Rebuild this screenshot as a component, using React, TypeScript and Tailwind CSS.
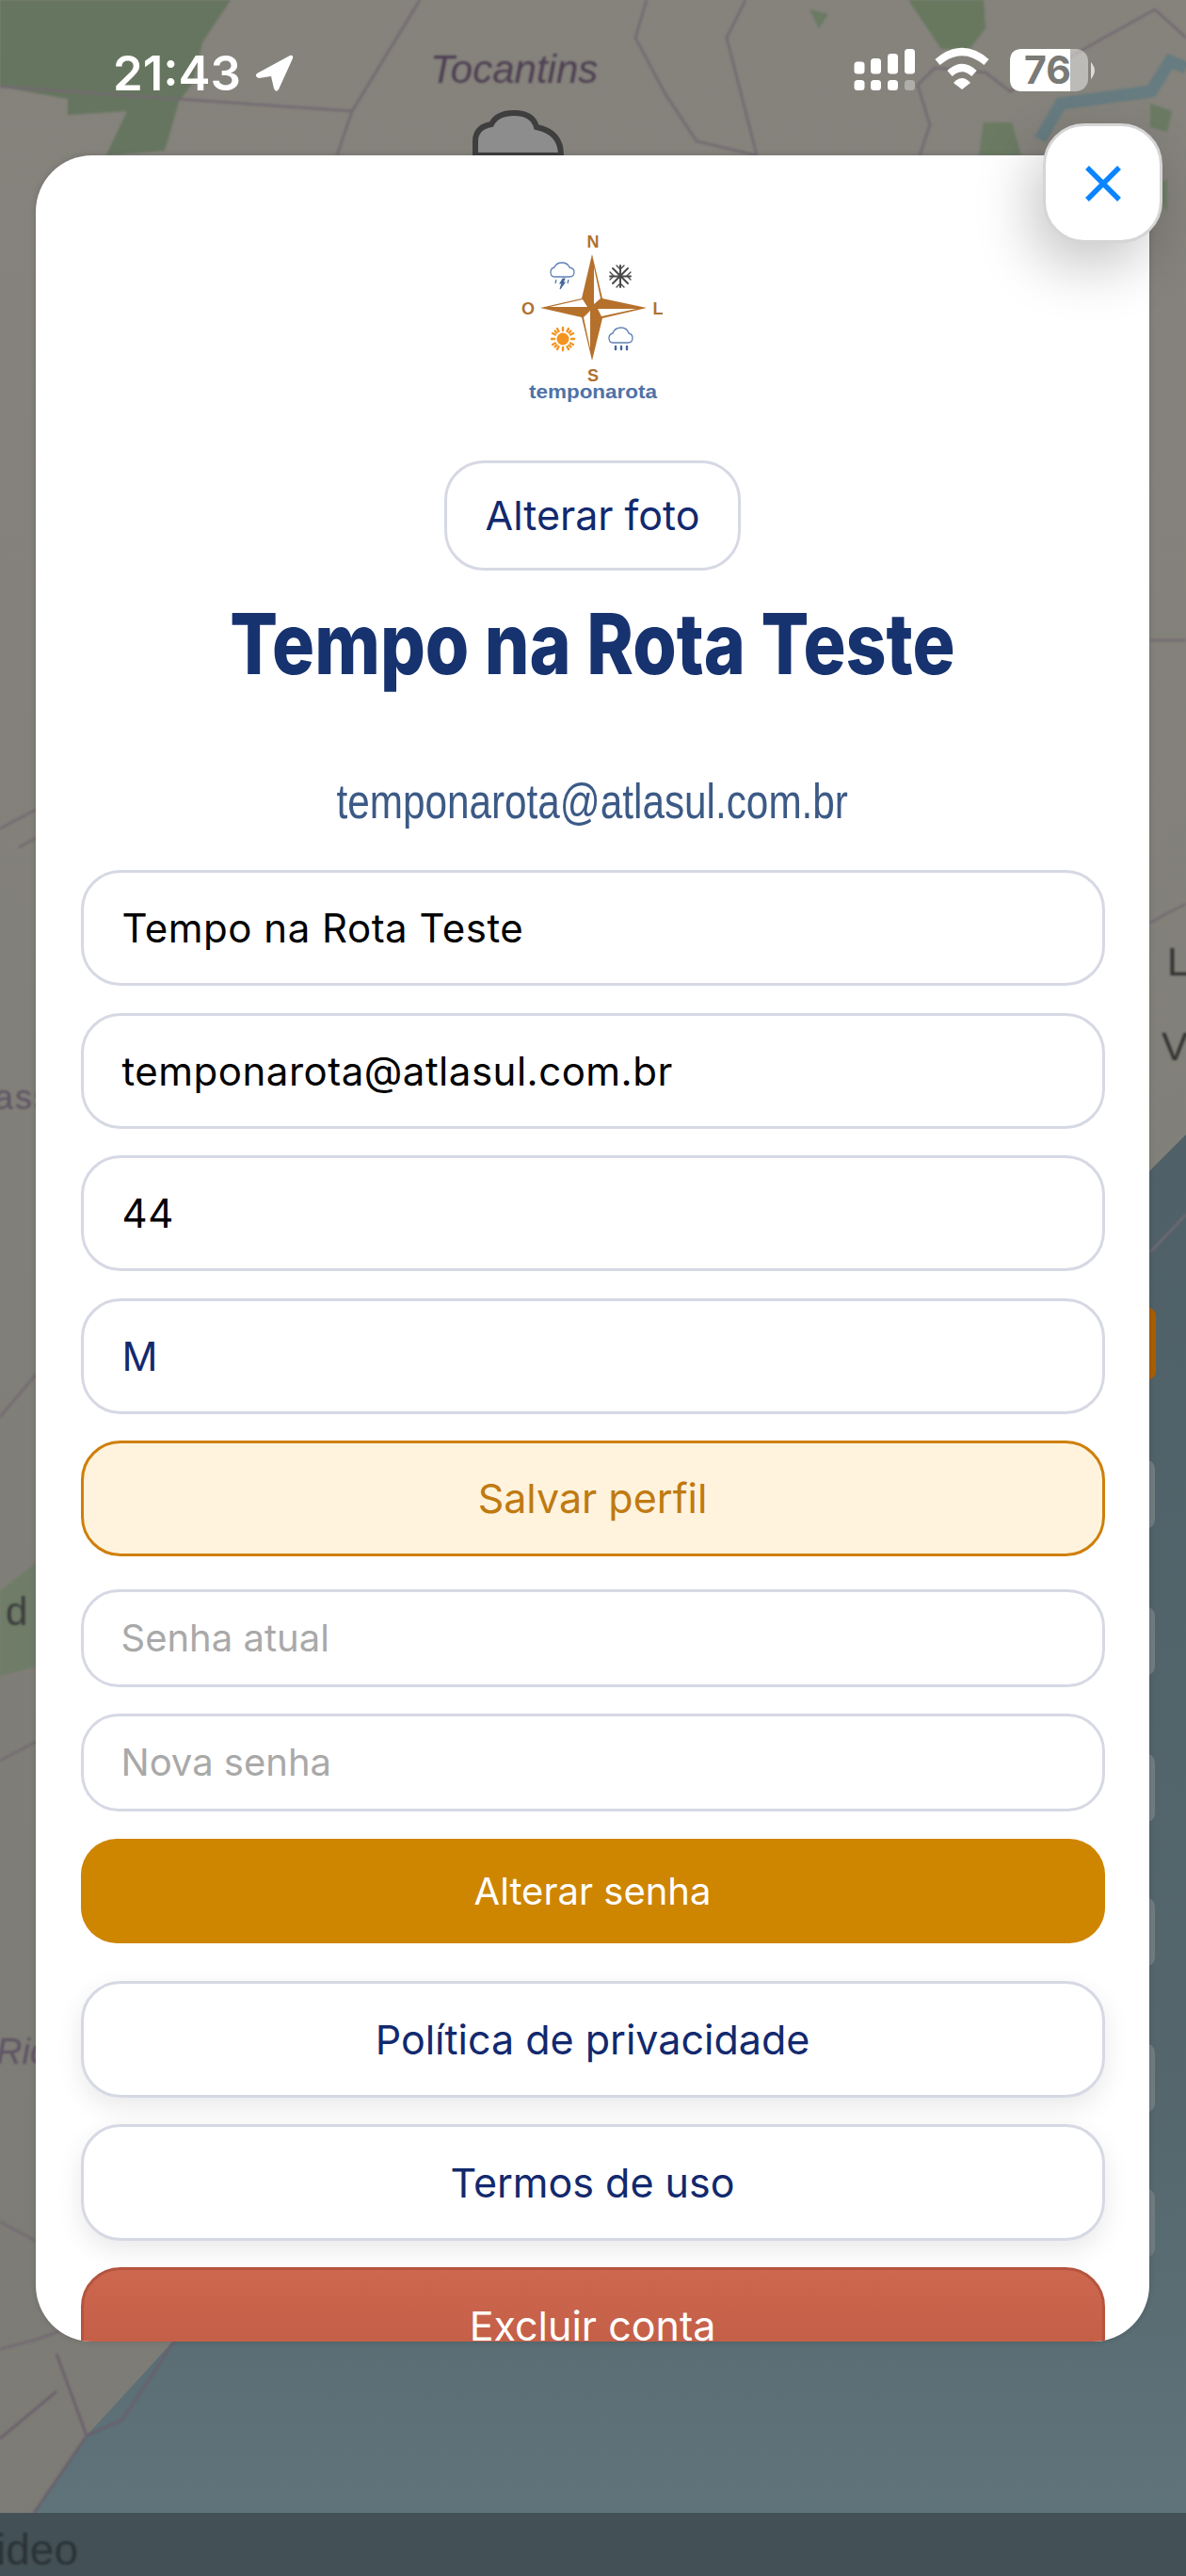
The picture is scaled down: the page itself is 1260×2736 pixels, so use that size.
import React from 'react';

const sans = "font-['Inter','Liberation_Sans',sans-serif]";

function MapBackground() {
  return (
    <svg className="absolute inset-0" width="1260" height="2736" viewBox="0 0 1260 2736">
      <defs>
        <linearGradient id="sea" x1="0" y1="0" x2="0" y2="1">
          <stop offset="0" stopColor="#4f6068" />
          <stop offset="0.7" stopColor="#55676d" />
          <stop offset="1" stopColor="#5f737a" />
        </linearGradient>
        <linearGradient id="land" x1="0" y1="0" x2="0" y2="1">
          <stop offset="0" stopColor="#85837c" />
          <stop offset="1" stopColor="#7c7b75" />
        </linearGradient>
      </defs>
      <rect width="1260" height="2736" fill="url(#land)" />
      <path d="M1260 1205 L1225 1240 L1180 1290 L1000 1400 L400 2300 L190 2480 L92 2587 L36 2669 L1260 2669 Z" fill="url(#sea)" />
      <g className="blur-[1px]">
        <path d="M0 0 H245 L215 45 L205 88 L190 108 L175 160 L113 165 L135 118 L72 122 V105 L0 92 Z" fill="#66755f" />
        <path d="M965 0 H1045 L1047 30 L1030 52 H1000 Z" fill="#68785f" />
        <path d="M1222 110 L1245 118 L1240 140 L1222 135 Z M1045 130 L1075 130 L1085 165 H1040 Z M860 10 L880 15 L870 30 Z" fill="#6b7a63" />
        <path d="M0 1690 L38 1660 V1770 L0 1780 Z M1225 200 L1240 190 V225 Z" fill="#6f7d68" />
        <path d="M0 92 L374 118 M446 0 L374 118 L358 165 M687 0 L675 40 L707 100 L740 150 L804 165 M792 0 L772 40 L804 165 M1227 10 L1173 40 L1073 97 L1047 77 L993 72 L975 90 L988 133 L977 165 M1227 10 L1260 40" fill="none" stroke="#736a72" strokeWidth="2.500" />
        <path d="M1105 148 L1127 110 L1223 97 L1243 65 L1260 72" fill="none" stroke="#667c80" strokeWidth="13" />
        <path d="M0 880 L38 860 M20 900 L38 890 M0 1505 L38 1460 M0 1870 L38 1850 M0 2360 L38 2380 M0 2495 L38 2485 L80 2470 M1222 680 L1260 680 M1222 980 L1240 970 L1260 960 M1222 1330 L1260 1290" fill="none" stroke="#736a72" strokeWidth="2.500" />
        <path d="M185 2487 L130 2570 L92 2587 L60 2500 M92 2587 L36 2669 M0 2590 L60 2540" fill="none" stroke="#6a5f6c" strokeWidth="2.500" />
      </g>
      <g className="blur-[1.2px]" fontFamily="Liberation Sans, sans-serif">
        <text x="457" y="88" fontSize="42" fontStyle="italic" fill="#4d3f52">Tocantins</text>
        <text x="-6" y="1178" fontSize="36" fill="#5e5364" letterSpacing="2">ass</text>
        <text x="6" y="1726" fontSize="42" fill="#3d3d3d">d</text>
        <text x="-4" y="2192" fontSize="38" fontStyle="italic" fill="#5e5364">Ric</text>
        <text x="1240" y="1036" fontSize="42" fill="#333">L</text>
        <text x="1234" y="1126" fontSize="42" fill="#333">V</text>
      </g>
      <path d="M505 165 V150 Q505 135 522 132 Q528 120 546 120 Q566 120 570 135 Q596 140 596 165 Z" fill="#8d8d8d" stroke="#3e3e3e" strokeWidth="6" />
      <rect x="1190" y="1388" width="38" height="78" rx="10" fill="#a85f00" />
      <g fill="#6f7c80">
        <rect x="1190" y="1550" width="37" height="74" rx="10" />
        <rect x="1190" y="1706" width="37" height="74" rx="10" />
        <rect x="1190" y="1862" width="37" height="74" rx="10" />
        <rect x="1190" y="2015" width="37" height="74" rx="10" />
        <rect x="1190" y="2170" width="37" height="74" rx="10" />
        <rect x="1190" y="2324" width="37" height="74" rx="10" />
      </g>
      <rect y="2669" width="1260" height="67" fill="#435157" />
      <text x="-4" y="2724" className="blur-[1px]" fontFamily="Liberation Sans, sans-serif" fontSize="46" fill="#2a3337">ideo</text>
    </svg>
  );
}

function StatusIcons() {
  return (
    <svg className="absolute left-[860px] top-0" width="400" height="100" viewBox="0 0 400 100">
      <g fill="#fff">
        <rect x="47.500" y="65.500" width="11" height="13" rx="3.500" />
        <rect x="65" y="62" width="11" height="16.500" rx="3.500" />
        <rect x="83" y="57" width="11" height="21.500" rx="3.500" />
        <rect x="101" y="52" width="11" height="26.500" rx="3.500" />
        <rect x="47.500" y="85" width="11" height="11" rx="3.500" />
        <rect x="65" y="85" width="11" height="11" rx="3.500" />
        <rect x="83" y="85" width="11" height="11" rx="3.500" />
        <rect x="101" y="85" width="11" height="11" rx="3.500" opacity="0.35" />
      </g>
      <path d="M136 66 Q162 44 188 66" fill="none" stroke="#fff" strokeWidth="8" />
      <path d="M149 78 Q162 66 175 78" fill="none" stroke="#fff" strokeWidth="8" />
      <path d="M153 88 Q162 78 171 88 L162 95 Z" fill="#fff" />
      <rect x="213" y="52" width="83" height="45" rx="13" fill="#fff" opacity="0.45" />
      <path d="M226 52 H277 V97 H226 Q213 97 213 84 V65 Q213 52 226 52 Z" fill="#fff" />
      <path d="M300 69 Q304 75 300 81 Z" fill="#fff" opacity="0.7" stroke="#fff" strokeWidth="2" />
      <text x="228" y="89" fontFamily="Inter, sans-serif" fontSize="41" fontWeight="700" fill="#7a7a76">76</text>
    </svg>
  );
}

function Logo() {
  return (
    <svg width="260" height="220" viewBox="0 0 260 220" className="shrink-0">
      <g fontFamily="Liberation Sans, sans-serif" fontWeight="700" fontSize="18" fill="#b0722f" textAnchor="middle">
        <text x="130" y="43">N</text>
        <text x="61" y="114">O</text>
        <text x="199" y="114">L</text>
        <text x="130" y="185">S</text>
      </g>
      <path d="M129 50 L118 97 L74 107 L118 117 L129 163 L140 118 L187 107 L140 97 Z" fill="#b5702b" />
      <path d="M131 64 L138 97 L131 103 Z M176 108 L139 116 L135 108 Z M127 150 L120 117 L127 110 Z M84 106 L119 98 L124 106 Z" fill="#fff" />
      <g fill="none" stroke="#5f80b5" strokeWidth="1.300">
        <path d="M91 74 H89 Q85 74 85 69 Q85 65 89 64 Q91 59 97 59 Q103 59 105 64 Q110 65 110 69 Q110 74 105 74 H91 Z" />
        <path d="M153 144 H151 Q147 144 147 139 Q147 135 151 134 Q153 128 160 128 Q166 128 168 134 Q172 135 172 139 Q172 144 167 144 Z" />
      </g>
      <path d="M98 76 L95 81 H97 L95 87 L100 80 H98 L100 76 Z M91 77 L90 81 M104 77 L103 81" fill="#46689c" stroke="#46689c" strokeWidth="1.100" />
      <path d="M154 148 V151 M160 148 V151 M166 148 V151" stroke="#46689c" strokeWidth="2.400" strokeLinecap="round" />
      <g stroke="#4a4a4a" strokeWidth="2" strokeLinecap="round">
        <path d="M159 62 V85 M148 73.500 H170 M151 65 L167 81 M167 65 L151 81" />
        <path d="M155 62 L159 66 L163 62 M155 85 L159 81 L163 85 M148 69 L152 73 L148 77 M170 69 L166 73 L170 77" fill="none" strokeWidth="1.400" />
      </g>
      <circle cx="98" cy="140" r="6.500" fill="#f2941f" />
      <g stroke="#f2941f" strokeWidth="2.400" strokeLinecap="round">
        <path d="M98 128 V131 M98 149 V152 M86 140 H89 M107 140 H110 M89.500 131.500 L91.500 133.500 M104.500 146.500 L106.500 148.500 M106.500 131.500 L104.500 133.500 M91.500 146.500 L89.500 148.500" />
        <path d="M92 129 L93.500 132 M104 129 L102.500 132 M87 134 L90 135.500 M87 146 L90 144.500 M109 134 L106 135.500 M109 146 L106 144.500 M92 151 L93.500 148 M104 151 L102.500 148" />
      </g>
      <text x="130" y="203" textAnchor="middle" fontFamily="Liberation Sans, sans-serif" fontWeight="700" fontSize="20" textLength={136} lengthAdjust="spacingAndGlyphs" fill="#4f72a6">temponarota</text>
    </svg>
  );
}

function Field({ children, color = 'text-black' }: { children: React.ReactNode; color?: string }) {
  return (
    <div className={`h-[123px] flex items-center px-[41px] rounded-[42px] border-[3px] border-[#d6d9e4] bg-white text-[42px] tracking-[0.5px] ${color}`}>
      {children}
    </div>
  );
}

function Placeholder({ children }: { children: React.ReactNode }) {
  return (
    <div className="h-[104px] flex items-center px-[40px] rounded-[40px] border-[3px] border-[#d6d9e4] bg-white text-[40px] text-[#a9a9a9]">
      {children}
    </div>
  );
}

function LinkButton({ children }: { children: React.ReactNode }) {
  return (
    <button className="h-[124px] shrink-0 flex items-center justify-center rounded-[42px] border-[3px] border-[#d6d9e4] bg-white text-[43px] text-[#12296e] shadow-[0_10px_28px_rgba(0,0,0,0.09)]">
      {children}
    </button>
  );
}

export default function App() {
  return (
    <div className={`relative w-[1260px] h-[2736px] overflow-hidden ${sans}`}>
      <MapBackground />

      {/* Status bar */}
      <div className="absolute left-[120px] top-[50px] flex items-center gap-[14px] text-white">
        <span className="text-[51px] leading-[56px] font-semibold">21:43</span>
        <svg width="42" height="42" viewBox="0 0 42 42">
          <path d="M3 21 L38 2 Q42 1 41 5 L26 38 Q23 42 21 37 L18 24 L5 26 Q0 24 3 21 Z" fill="#fff" />
        </svg>
      </div>
      <StatusIcons />

      {/* Profile modal */}
      <div className="absolute left-[38px] top-[165px] w-[1183px] h-[2322px] rounded-[60px] bg-white overflow-hidden flex flex-col items-center shadow-[0_0_6px_rgba(0,0,0,0.15)]">
        <div className="mt-[55px]"><Logo /></div>
        <button className="mt-[49px] w-[315px] h-[117px] shrink-0 rounded-[42px] border-[3px] border-[#d6d9e4] text-[43px] text-[#12296e]">
          Alterar foto
        </button>
        <h1 className="mt-[28px] text-[90px] leading-[100px] font-extrabold text-[#17336f] whitespace-nowrap scale-x-[0.835]">
          Tempo na Rota Teste
        </h1>
        <p className="mt-[84px] text-[52px] leading-[66px] text-[#3c5a86] whitespace-nowrap scale-x-[0.813] font-['Liberation_Sans',sans-serif]">
          temponarota@atlasul.com.br
        </p>

        <div className="mt-[40px] w-[1088px] shrink-0 flex flex-col">
          <div className="flex flex-col gap-[28.500px]">
            <Field>Tempo na Rota Teste</Field>
            <Field>temponarota@atlasul.com.br</Field>
            <Field>44</Field>
            <Field color="text-[#12296e]">M</Field>
            <button className="h-[123px] rounded-[42px] border-[3px] border-[#cf7f0a] bg-[#fff3dd] text-[43px] text-[#c07a10]">
              Salvar perfil
            </button>
          </div>
          <div className="mt-[35px] flex flex-col gap-[28px]">
            <Placeholder>Senha atual</Placeholder>
            <Placeholder>Nova senha</Placeholder>
          </div>
          <button className="mt-[29px] h-[111px] rounded-[38px] bg-[#ce8500] text-[40px] text-white">
            Alterar senha
          </button>
          <div className="mt-[40px] flex flex-col gap-[28px]">
            <LinkButton>Política de privacidade</LinkButton>
            <LinkButton>Termos de uso</LinkButton>
            <button className="h-[124px] shrink-0 rounded-[42px] border-[3px] border-[#b5553f] bg-gradient-to-b from-[#cd684f] to-[#c05a43] text-[43px] text-white">
              Excluir conta
            </button>
          </div>
        </div>
      </div>

      {/* Close button */}
      <button className="absolute left-[1108px] top-[131px] w-[127px] h-[127px] rounded-[44px] border-[3px] border-[#d5d5d5] bg-white flex items-center justify-center shadow-[-12px_24px_60px_rgba(0,0,0,0.22)]">
        <svg width="38" height="38" viewBox="0 0 38 38">
          <path d="M2 2 L36 36 M36 2 L2 36" stroke="#0a84ff" strokeWidth="5.500" fill="none" />
        </svg>
      </button>
    </div>
  );
}
